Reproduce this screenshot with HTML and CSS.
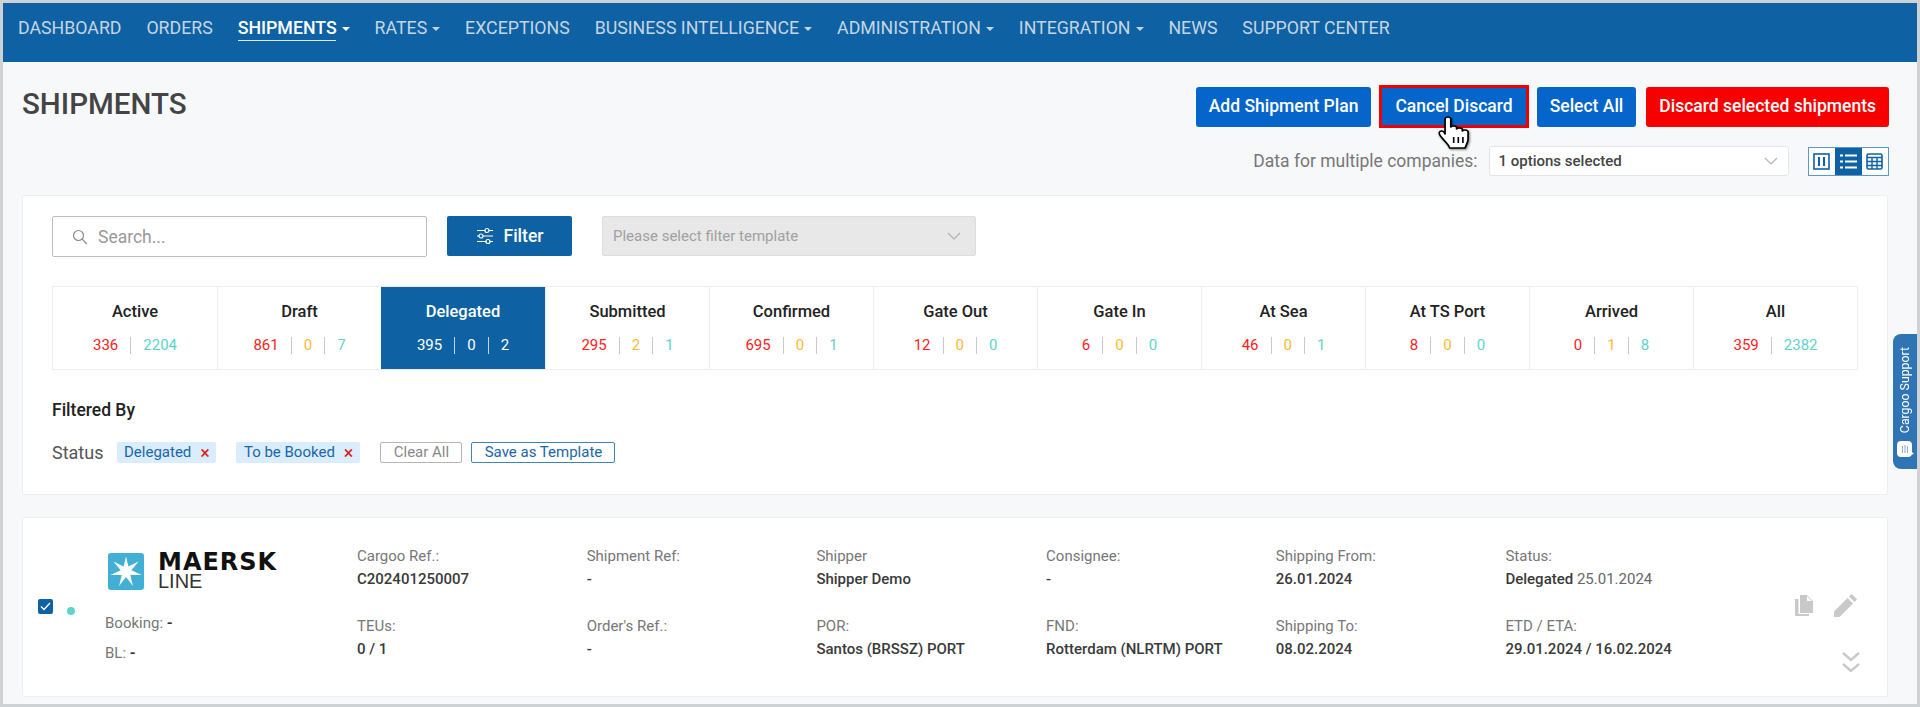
FILE: index.html
```html
<!DOCTYPE html>
<html>
	<head>
		<meta charset="utf-8">
		<title>Shipments</title>
		<link rel="stylesheet" href="styles.css">
	</head>
	<body>
		<div class="frame">
			<div class="navbar">
				<a href="#">Dashboard</a>
				<a href="#">Orders</a>
				<a href="#" class="active caret">Shipments</a>
				<a href="#" class="caret">Rates</a>
				<a href="#">Exceptions</a>
				<a href="#" class="caret">Business Intelligence</a>
				<a href="#" class="caret">Administration</a>
				<a href="#" class="caret">Integration</a>
				<a href="#">News</a>
				<a href="#">Support Center</a>
			</div>

			<div class="head">
				<h1>SHIPMENTS</h1>
				<div class="head-right">
					<div class="actions">
						<button class="btn">Add Shipment Plan</button>
						<button class="btn btn-outlined">Cancel Discard</button>
						<button class="btn">Select All</button>
						<button class="btn btn-red">Discard selected shipments</button>
					</div>
					<div class="companies">
						<span class="companies-label">Data for multiple companies:</span>
						<div class="select-box">
							<span>1 options selected</span>
							<svg class="chev" width="14" height="8" viewBox="0 0 14 8"><path d="M1 1l6 6 6-6" fill="none" stroke="#b5b5b5" stroke-width="1.2"/></svg>
						</div>
						<div class="views">
							<div class="view">
								<svg width="17" height="17" viewBox="0 0 17 17"><rect x="1" y="1" width="15" height="15" fill="none" stroke="#0e62a3" stroke-width="1.6"/><path d="M6 4v9M11 4v9" stroke="#0e62a3" stroke-width="2"/></svg>
							</div>
							<div class="view view-on">
								<svg width="17" height="15" viewBox="0 0 17 15"><path d="M0 1.5h3M5 1.5h12M0 7.5h3M5 7.5h12M0 13.5h3M5 13.5h12" stroke="#fff" stroke-width="2.2"/></svg>
							</div>
							<div class="view">
								<svg width="17" height="17" viewBox="0 0 17 17"><rect x="1" y="1" width="15" height="15" rx="1.5" fill="none" stroke="#0e62a3" stroke-width="1.6"/><path d="M1 4.5h15M1 8.5h15M1 12.5h15M6 4v12M11 4v12" stroke="#0e62a3" stroke-width="1.4"/></svg>
							</div>
						</div>
					</div>
				</div>
			</div>

			<div class="card">
				<div class="filter-row">
					<div class="search">
						<svg width="16" height="16" viewBox="0 0 16 16"><circle cx="6.5" cy="6.5" r="5" fill="none" stroke="#8a8a8a" stroke-width="1.2"/><path d="M10.2 10.2l4.6 4.8" stroke="#8a8a8a" stroke-width="1.2"/></svg>
						<span>Search...</span>
					</div>
					<button class="filter-btn">
						<svg width="18" height="18" viewBox="0 0 18 18" fill="none" stroke="#fff" stroke-width="1.2"><path d="M1 3.5h8M13 3.5h4M1 9h2M7 9h10M1 14.5h9M14 14.5h3"/><circle cx="11" cy="3.5" r="2"/><circle cx="5" cy="9" r="2"/><circle cx="12" cy="14.5" r="2"/></svg>
						Filter
					</button>
					<div class="template-select">
						<span>Please select filter template</span>
						<svg width="14" height="8" viewBox="0 0 14 8"><path d="M1 1l6 6 6-6" fill="none" stroke="#b0b0b0" stroke-width="1.2"/></svg>
					</div>
				</div>

				<div class="statuses">
					<div class="status">
						<div class="status-name">Active</div>
						<div class="counts"><span class="red">336</span><i></i><span class="teal">2204</span></div>
					</div>
					<div class="status">
						<div class="status-name">Draft</div>
						<div class="counts"><span class="red">861</span><i></i><span class="orange">0</span><i></i><span class="teal">7</span></div>
					</div>
					<div class="status status-on">
						<div class="status-name">Delegated</div>
						<div class="counts"><span>395</span><i></i><span>0</span><i></i><span>2</span></div>
					</div>
					<div class="status">
						<div class="status-name">Submitted</div>
						<div class="counts"><span class="red">295</span><i></i><span class="orange">2</span><i></i><span class="teal">1</span></div>
					</div>
					<div class="status">
						<div class="status-name">Confirmed</div>
						<div class="counts"><span class="red">695</span><i></i><span class="orange">0</span><i></i><span class="teal">1</span></div>
					</div>
					<div class="status">
						<div class="status-name">Gate Out</div>
						<div class="counts"><span class="red">12</span><i></i><span class="orange">0</span><i></i><span class="teal">0</span></div>
					</div>
					<div class="status">
						<div class="status-name">Gate In</div>
						<div class="counts"><span class="red">6</span><i></i><span class="orange">0</span><i></i><span class="teal">0</span></div>
					</div>
					<div class="status">
						<div class="status-name">At Sea</div>
						<div class="counts"><span class="red">46</span><i></i><span class="orange">0</span><i></i><span class="teal">1</span></div>
					</div>
					<div class="status">
						<div class="status-name">At TS Port</div>
						<div class="counts"><span class="red">8</span><i></i><span class="orange">0</span><i></i><span class="teal">0</span></div>
					</div>
					<div class="status">
						<div class="status-name">Arrived</div>
						<div class="counts"><span class="red">0</span><i></i><span class="orange">1</span><i></i><span class="teal">8</span></div>
					</div>
					<div class="status">
						<div class="status-name">All</div>
						<div class="counts"><span class="red">359</span><i></i><span class="teal">2382</span></div>
					</div>
				</div>

				<div class="filtered-title">Filtered By</div>
				<div class="filtered-row">
					<span class="filtered-label">Status</span>
					<span class="chip">Delegated <b>×</b></span>
					<span class="chip chip-2">To be Booked <b>×</b></span>
					<button class="mini mini-gray">Clear All</button>
					<button class="mini mini-blue">Save as Template</button>
				</div>
			</div>

			<div class="card shipment">
				<div class="pick">
					<span class="checkbox">
						<svg width="11" height="9" viewBox="0 0 11 9"><path d="M1 4.5l3 3 6-6.5" fill="none" stroke="#fff" stroke-width="1.3"/></svg>
					</span>
					<span class="dot"></span>
				</div>
				<div class="carrier">
					<div class="logo">
						<svg width="36" height="37" viewBox="0 0 36 37"><rect width="36" height="37" rx="3" fill="#42b0d5"/><path d="M18 3.500l2.400 10 10.100-5-7.100 8.800 10.200 4.800-11.300-.2 2.600 11-6.900-9-6.900 9 2.600-11-11.300.2 10.200-4.800-7.100-8.800 10.100 5z" fill="#fff"/></svg>
						<div class="logo-text">
							<div class="logo-maersk">MAERSK</div>
							<div class="logo-line">LINE</div>
						</div>
					</div>
					<div class="carrier-row">Booking: <b>-</b></div>
					<div class="carrier-row">BL: <b>-</b></div>
				</div>
				<div class="fields">
					<div class="field"><label>Cargoo Ref.:</label><span>C202401250007</span></div>
					<div class="field"><label>Shipment Ref:</label><span>-</span></div>
					<div class="field"><label>Shipper</label><span>Shipper Demo</span></div>
					<div class="field"><label>Consignee:</label><span>-</span></div>
					<div class="field"><label>Shipping From:</label><span>26.01.2024</span></div>
					<div class="field"><label>Status:</label><span>Delegated <em>25.01.2024</em></span></div>
					<div class="field"><label>TEUs:</label><span>0 / 1</span></div>
					<div class="field"><label>Order's Ref.:</label><span>-</span></div>
					<div class="field"><label>POR:</label><span>Santos (BRSSZ) PORT</span></div>
					<div class="field"><label>FND:</label><span>Rotterdam (NLRTM) PORT</span></div>
					<div class="field"><label>Shipping To:</label><span>08.02.2024</span></div>
					<div class="field"><label>ETD / ETA:</label><span>29.01.2024 / 16.02.2024</span></div>
				</div>
				<div class="row-tools">
					<div class="tools-top">
						<svg width="18" height="21" viewBox="0 0 18 21" fill="#c9c9c9"><path d="M5 0h7l6 6v12H5zM12 1v5h5z" fill-rule="evenodd"/><path d="M0 4h3.500v15H14v2H0z"/></svg>
						<svg width="23" height="23" viewBox="0 0 23 23" fill="#c9c9c9"><path d="M0 23v-5.500L13.500 4l5.500 5.500L5.500 23zM15 2.500L17 .5q.6-.5 1.200 0l4.300 4.300q.5.600 0 1.200l-2 2z"/></svg>
					</div>
					<svg class="tools-more" width="18" height="21" viewBox="0 0 18 21" fill="none" stroke="#c9c9c9" stroke-width="2.400"><path d="M1 1l8 7 8-7M1 12l8 7 8-7"/></svg>
				</div>
			</div>

			<div class="support">
				<svg width="17" height="16" viewBox="0 0 17 16"><path d="M4 0h7q4 0 4 4v7l2 2-2 .5Q14 16 11 16H4q-4 0-4-4V4q0-4 4-4z" fill="#fff"/><path d="M5.500 5v7M8 4v8M10.500 5v7" stroke="#8fb3d6" stroke-width="1.100"/></svg>
				<span>Cargoo Support</span>
			</div>

			<!-- cursor over the cancel button -->
			<svg class="hand" width="38" height="34" viewBox="0 0 33 34" preserveAspectRatio="none">
				<path d="M7 2.500C8 .5 11 .5 12 2.500V11c1-1.500 4-1.500 5 0v2c1-1.500 4-1.500 5 0v2c1-1.500 4-1.500 5 .5V23c0 4-2 6-2.500 9H11c-1-4-4-6-8-12-2-3-1-5 1-5 1 0 2.500 1.500 3 3z" fill="#fff" stroke="#000" stroke-width="1.500" stroke-linejoin="round"/>
				<path d="M14.500 21v6M18.500 21v6M22.500 21v6" stroke="#000" stroke-width="1.400"/>
			</svg>
		</div>
	</body>
</html>
```

FILE: styles.css
```css
* {
	padding: 0;
	margin: 0;
	box-sizing: border-box;
}

body {
	font-family: Roboto, "Liberation Sans", sans-serif;
	background-color: #f7f8fa;
	color: #333;
	overflow: hidden;
}

button {
	font-family: inherit;
	cursor: pointer;
}

.frame {
	position: relative;
	height: 707px;
	overflow: hidden;
	background-color: #f7f8fa;
	border-style: solid;
	border-color: #cfd2d5;
	border-width: 3px 3px 3px 3px;
}

/* top navigation */
.navbar {
	display: flex;
	gap: 24.9px;
	height: 59px;
	padding: 12px 0 0 15px;
	background-color: #0e62a3;
}

.navbar a {
	position: relative;
	height: 28px;
	line-height: 26px;
	font-size: 17.75px;
	text-transform: uppercase;
	text-decoration: none;
	color: #c5d5e5;
}

.navbar a.active {
	color: #fff;
	font-weight: 500;
}

.navbar a.active::before {
	content: "";
	position: absolute;
	left: 0;
	right: 14px;
	bottom: 2px;
	height: 1px;
	background-color: #dfe9f2;
}

.navbar .caret::after {
	content: "";
	display: inline-block;
	margin-left: 5px;
	vertical-align: 3px;
	border-style: solid;
	border-width: 4px 4px 0 4px;
	border-color: currentColor transparent transparent transparent;
}

/* page head */
.head {
	display: flex;
	justify-content: space-between;
	padding: 23px 28px 0 19px;
}

h1 {
	font-size: 29.5px;
	font-weight: 500;
	line-height: 38px;
	color: #444;
}

.head-right {
	display: flex;
	flex-direction: column;
	align-items: flex-end;
}

.actions {
	display: flex;
	align-items: center;
	gap: 10px;
}

.btn {
	height: 40px;
	padding: 0 13px 2px;
	border: 0;
	border-radius: 3px;
	font-size: 17.5px;
	font-weight: 500;
	color: #fff;
	background-color: #0565cb;
}

.btn-outlined {
	height: 43px;
	border: 3px solid #f00000;
	border-radius: 0;
	margin: 0 -2px;
}

.btn-red {
	background-color: #f70000;
}

.companies {
	display: flex;
	align-items: center;
	margin-top: 18px;
}

.companies-label {
	font-size: 17.5px;
	color: #777;
	margin-right: 11px;
}

.select-box {
	display: flex;
	align-items: center;
	justify-content: space-between;
	width: 300px;
	height: 30px;
	padding: 0 10px 0 9px;
	margin-right: 19px;
	background-color: #fff;
	border: 1px solid #e3e5e8;
	border-radius: 3px;
	font-size: 15px;
	font-weight: 500;
	color: #444;
}

.views {
	display: flex;
	height: 29px;
	border: 1px solid #5d98c7;
}

.view {
	display: flex;
	align-items: center;
	justify-content: center;
	width: 26.500px;
	background-color: #fff;
}

.view-on {
	background-color: #0e62a3;
}

/* cards */
.card {
	margin: 19px 29px 0 19px;
	height: 300px;
	padding: 20px 29px 0 29px;
	background-color: #fff;
	border: 1px solid #eceef0;
	border-radius: 2px;
}

.filter-row {
	display: flex;
	gap: 20px;
}

.search {
	display: flex;
	align-items: center;
	gap: 10px;
	width: 375px;
	height: 41px;
	padding-left: 19px;
	border: 1px solid #bdbdbd;
	border-radius: 2px;
	font-size: 17.5px;
	color: #999;
}

.filter-btn {
	display: flex;
	align-items: center;
	justify-content: center;
	gap: 10px;
	width: 125px;
	height: 40px;
	border: 0;
	border-radius: 2px;
	font-size: 17.5px;
	font-weight: 500;
	color: #fff;
	background-color: #0e62a3;
}

.template-select {
	display: flex;
	align-items: center;
	justify-content: space-between;
	width: 374px;
	height: 40px;
	margin-left: 10px;
	padding: 0 14px 0 10px;
	background-color: #e8e8e8;
	border: 1px solid #ddd;
	border-radius: 2px;
	font-size: 15px;
	color: #a0a0a0;
}

.statuses {
	display: grid;
	grid-template-columns: repeat(11, 1fr);
	height: 84px;
	margin-top: 29px;
	border: 1px solid #eceef0;
}

.status {
	text-align: center;
	padding-top: 15px;
	border-left: 1px solid #eceef0;
}

.status:first-child {
	border-left: 0;
}

.status-name {
	font-size: 16.5px;
	font-weight: 500;
	line-height: 20px;
	color: #222;
}

.counts {
	display: flex;
	align-items: center;
	justify-content: center;
	gap: 12px;
	margin-top: 14px;
	height: 18px;
	font-size: 15px;
	font-weight: 400;
}

.counts i {
	width: 1px;
	height: 17px;
	background-color: #c9c9c9;
}

.red {
	color: #ff2020;
}

.orange {
	color: #fdb933;
}

.teal {
	color: #5ed3cc;
}

.status-on {
	background-color: #0e62a3;
	border-left: 0;
}

.status-on .status-name,
.status-on .counts {
	color: #fff;
}

.status-on .counts i {
	background-color: #c5d5e5;
}

.filtered-title {
	margin-top: 30px;
	font-size: 17.5px;
	font-weight: 500;
	line-height: 20px;
	color: #222;
}

.filtered-row {
	display: flex;
	align-items: center;
	margin-top: 21px;
	height: 22px;
}

.filtered-label {
	width: 65px;
	font-size: 18px;
	color: #555;
}

.chip {
	display: flex;
	align-items: center;
	gap: 9px;
	height: 21px;
	padding: 0 6px 0 7px;
	background-color: #d9edfc;
	border-radius: 2px;
	font-size: 15px;
	color: #1b66a8;
}

.chip b {
	font-size: 18px;
	font-weight: 400;
	color: #d91e1e;
}

.chip-2 {
	margin-left: 20px;
	padding: 0 7px 0 8px;
}

.mini {
	height: 21px;
	margin-left: 20px;
	background-color: #fff;
	border-radius: 2px;
	font-size: 15px;
}

.mini-gray {
	width: 82px;
	border: 1px solid #b5b5b5;
	color: #888;
}

.mini-blue {
	width: 144px;
	margin-left: 9px;
	border: 1px solid #3f83bd;
	color: #1b66a8;
}

/* shipment row */
.shipment {
	display: flex;
	height: 180px;
	margin-top: 22px;
	padding: 0;
	position: relative;
}

.pick {
	display: flex;
	align-items: flex-start;
	width: 62px;
	padding: 81px 0 0 15px;
}

.checkbox {
	display: flex;
	align-items: center;
	justify-content: center;
	width: 15px;
	height: 15px;
	background-color: #0e62a3;
	border-radius: 2px;
}

.dot {
	width: 8px;
	height: 8px;
	margin: 8px 0 0 14px;
	border-radius: 50%;
	background-color: #5ed3cc;
}

.carrier {
	width: 272px;
	padding: 35px 0 0 20px;
}

.logo {
	display: flex;
	gap: 14px;
	margin: 0 0 23px 3px;
}

.logo svg {
	flex: none;
}

.logo-maersk {
	font-family: "DejaVu Sans", sans-serif;
	font-size: 24px;
	font-weight: 700;
	line-height: 19px;
	letter-spacing: 1px;
	color: #111;
}

.logo-line {
	font-family: "Liberation Sans", sans-serif;
	font-size: 20px;
	line-height: 18px;
	color: #333;
}

.carrier-row {
	font-size: 15px;
	line-height: 20px;
	margin-bottom: 10px;
	color: #777;
}

.carrier-row b {
	color: #333;
}

.fields {
	display: grid;
	grid-template-columns: repeat(6, 229.7px);
	grid-auto-rows: 70px;
	width: 1378px;
	padding-top: 28px;
}

.field label {
	display: block;
	font-size: 15px;
	line-height: 20px;
	margin-bottom: 3px;
	color: #777;
}

.field span {
	display: block;
	font-size: 15px;
	font-weight: 500;
	line-height: 20px;
	color: #3a3a3a;
}

.field em {
	font-style: normal;
	font-weight: 400;
	color: #666;
}

.row-tools {
	position: absolute;
	top: 76px;
	right: 30px;
	display: flex;
	flex-direction: column;
	align-items: flex-end;
}

.tools-top {
	display: flex;
	align-items: center;
	gap: 21px;
}

.tools-more {
	margin: 35px -3px 0 0;
}

/* floating things */
.support {
	position: absolute;
	top: 331px;
	right: 0;
	display: flex;
	flex-direction: column-reverse;
	align-items: center;
	justify-content: flex-start;
	gap: 8px;
	width: 24px;
	height: 135px;
	padding: 13px 0 12px 0;
	background-color: #2f75b5;
	border-radius: 8px 0 0 8px;
	color: #fff;
	font-size: 12.300px;
}

.support span {
	writing-mode: vertical-rl;
	transform: rotate(180deg);
	white-space: nowrap;
}

.support svg {
	flex: none;
}

.hand {
	position: absolute;
	top: 113px;
	left: 1434px;
	filter: drop-shadow(1px 1px 1px rgba(0, 0, 0, 0.5));
}
```
